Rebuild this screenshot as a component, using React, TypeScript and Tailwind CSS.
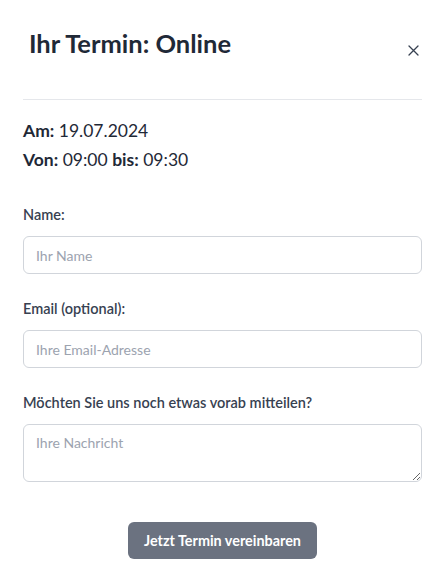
import React, { useState } from 'react';

export default function App() {
  const [name, setName] = useState('');
  const [email, setEmail] = useState('');
  const [message, setMessage] = useState('');

  return (
    <div className="min-h-screen w-full bg-white font-['Lato','Noto_Sans',sans-serif] text-[#212529]">
      <div className="px-[23px]">
        {/* Header */}
        <div className="flex items-start justify-between pt-[27px] pb-[40px] border-b border-[#e5e7eb]">
          <h2 className="ml-[6px] text-[25.5px] leading-[32px] font-bold text-[#1f2937]">
            Ihr Termin: Online
          </h2>
          <button className="mt-[18px] mr-[3px] text-[#374151] hover:text-black">
            <svg width="11" height="11" viewBox="0 0 11 11" fill="none" stroke="currentColor" strokeWidth="1.3" strokeLinecap="round">
              <path d="M1 1L10 10M10 1L1 10" />
            </svg>
          </button>
        </div>

        {/* Termin details */}
        <div className="pt-[16px] text-[17.5px] leading-[29px] text-[#1f2937]">
          <p>
            <span className="font-bold">Am:</span> 19.07.2024
          </p>
          <p>
            <span className="font-bold">Von:</span> 09:00{' '}
            <span className="font-bold">bis:</span> 09:30
          </p>
        </div>

        {/* Form */}
        <form className="mt-[31px] flex flex-col" onSubmit={(e) => e.preventDefault()}>
          <label className="text-[14.5px] leading-[20px] font-semibold text-[#374151]">Name:</label>
          <input
            value={name}
            onChange={(e) => setName(e.target.value)}
            placeholder="Ihr Name"
            className="mt-[11px] h-[38px] w-full rounded-[6px] border border-[#d1d5db] px-[12px] text-[14px] placeholder:text-[#9ca3af] outline-none focus:border-gray-400"
          />

          <label className="mt-[25px] text-[14.5px] leading-[20px] font-semibold text-[#374151]">Email (optional):</label>
          <input
            value={email}
            onChange={(e) => setEmail(e.target.value)}
            placeholder="Ihre Email-Adresse"
            className="mt-[11px] h-[38px] w-full rounded-[6px] border border-[#d1d5db] px-[12px] text-[14px] placeholder:text-[#9ca3af] outline-none focus:border-gray-400"
          />

          <label className="mt-[25px] text-[14.5px] leading-[20px] font-semibold text-[#374151]">
            Möchten Sie uns noch etwas vorab mitteilen?
          </label>
          <textarea
            value={message}
            onChange={(e) => setMessage(e.target.value)}
            placeholder="Ihre Nachricht"
            className="mt-[11px] h-[58px] w-full rounded-[6px] border border-[#d1d5db] px-[12px] py-[8px] text-[14px] leading-[20px] placeholder:text-[#9ca3af] outline-none focus:border-gray-400"
          />

          <div className="mt-[40px] flex justify-center">
            <button
              type="submit"
              className="h-[37px] w-[189px] rounded-[6px] bg-[#6b7280] text-[14.4px] font-bold text-white hover:bg-[#4b5563]"
            >
              Jetzt Termin vereinbaren
            </button>
          </div>
        </form>
      </div>
    </div>
  );
}
